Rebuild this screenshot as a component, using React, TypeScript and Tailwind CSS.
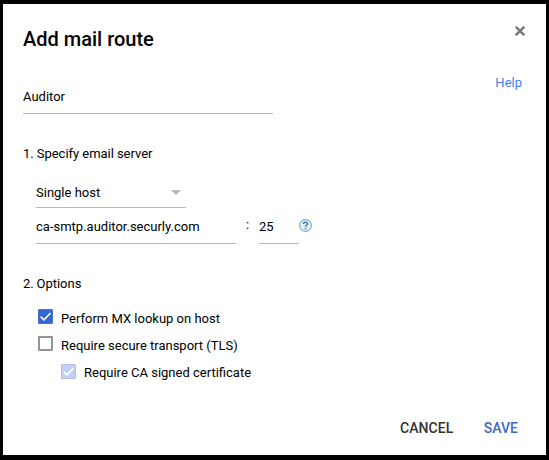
import { useState } from "react";

const fieldCls = "border-b border-[#b8b8b8] bg-transparent leading-5 outline-none";

type OptionProps = {
  label: string;
  checked: boolean;
  disabled?: boolean;
  className?: string;
  onChange?: () => void;
};

function Option({ label, checked, disabled, className = "", onChange }: OptionProps) {
  const box = disabled
    ? "mt-px border border-[#b4bfdf] bg-[#c3d0f3]"
    : checked
      ? "border border-[#4a6fc4] bg-[#3367d6]"
      : "border-2 border-[#959595] bg-white";

  return (
    <button
      type="button"
      role="checkbox"
      aria-checked={checked}
      disabled={disabled}
      onClick={onChange}
      className={`flex h-[27px] items-start gap-2 text-left ${className}`}
    >
      <span className={`flex h-[15px] w-[15px] shrink-0 items-center justify-center rounded-[1px] ${box}`}>
        {checked && (
          <svg viewBox="0 0 13 13" fill="none" stroke="#fff" strokeWidth="1.6" aria-hidden="true" className="h-[13px] w-[13px] shrink-0">
            <path d="M1.6 6.6 4.9 9.9 11.6 3" />
          </svg>
        )}
      </span>
      <span className="leading-5">{label}</span>
    </button>
  );
}

export default function App() {
  const [mxLookup, setMxLookup] = useState(true);
  const [tls, setTls] = useState(false);

  return (
    <div className="h-[460px] w-[549px] bg-black pt-1 pr-[3px] pb-[5px] pl-[3px] font-['Roboto',sans-serif] text-[13px] text-black">
      <div role="dialog" aria-label="Add mail route" className="flex h-full flex-col bg-white px-5">
        <header className="flex h-[83px] items-start justify-between pt-[21px]">
          <h1 className="text-xl leading-7 font-medium">Add mail route</h1>
          <button type="button" aria-label="Close" className="p-px text-[#777]">
            <svg viewBox="0 0 10 10" fill="none" stroke="currentColor" strokeWidth="2.4" aria-hidden="true" className="h-[10px] w-[10px]">
              <path d="M.7.7l8.6 8.6M9.3.7L.7 9.3" />
            </svg>
          </button>
        </header>

        <div className="flex items-start justify-between">
          <input aria-label="Name" defaultValue="Auditor" className={`h-[27px] w-[250px] pb-2 ${fieldCls}`} />
          <a href="#" className="-mt-3.5 mr-1 leading-5 text-[#427fed]">Help</a>
        </div>

        <section className="pt-[30px]">
          <h2 className="leading-5 [word-spacing:-0.25px]">1. Specify email server</h2>
          <div className="pt-[19px] pl-[13px]">
            <button type="button" className={`flex h-[25px] w-[150px] items-start justify-between pr-[5px] ${fieldCls}`}>
              Single host
              <span className="mt-[7px] border-x-5 border-t-5 border-x-transparent border-t-[#b8b8b8]" />
            </button>
            <div className="flex items-start pt-[9px]">
              <input aria-label="Host" defaultValue="ca-smtp.auditor.securly.com" className={`h-[27px] w-[200px] pb-2 ${fieldCls}`} />
              <span className="w-[23px] pl-2.5 leading-4">:</span>
              <input aria-label="Port" defaultValue="25" className={`h-[27px] w-10 pb-2 ${fieldCls}`} />
              <svg viewBox="0 0 13 13" fill="none" aria-hidden="true" className="mt-0.5 h-[13px] w-[13px]">
                <circle cx="6.5" cy="6.5" r="5.9" fill="#dff3fa" stroke="#86acbb" strokeWidth="1.2" />
                <path d="M4.5 5c0-2.4 4-2.4 4 0 0 1.4-2 1.4-2 2.8" stroke="#477fa9" strokeWidth="1.5" />
                <path d="M5.7 8.8h1.6v1.4H5.7z" fill="#477fa9" />
              </svg>
            </div>
          </div>
        </section>

        <section className="pt-[30px]">
          <h2 className="leading-5 [word-spacing:-0.5px]">2. Options</h2>
          <div className="flex flex-col items-start pt-[15px] pl-[15px]">
            <Option label="Perform MX lookup on host" checked={mxLookup} onChange={() => setMxLookup(!mxLookup)} />
            <Option label="Require secure transport (TLS)" checked={tls} onChange={() => setTls(!tls)} />
            <Option label="Require CA signed certificate" checked disabled className="ml-[23px]" />
          </div>
        </section>

        <footer className="mt-auto flex justify-end gap-[30.5px] pr-2 pb-[17px] text-sm leading-5 font-medium">
          <button type="button" className="tracking-[0.05px] text-[#333]">CANCEL</button>
          <button type="button" className="text-[#3f68c9]">SAVE</button>
        </footer>
      </div>
    </div>
  );
}
